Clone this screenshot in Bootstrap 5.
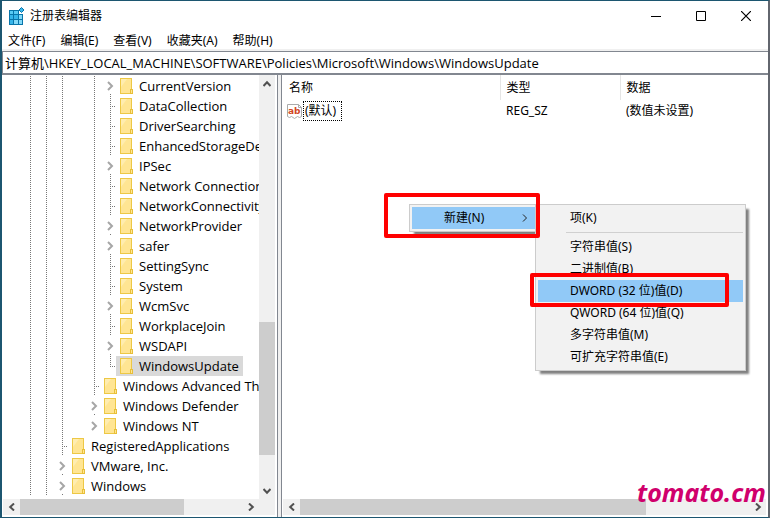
<!DOCTYPE html>
<html lang="zh-CN">
<head>
<meta charset="utf-8">
<meta name="viewport" content="width=device-width, initial-scale=1">
<title>注册表编辑器</title>
<link href="https://cdn.jsdelivr.net/npm/bootstrap@5.3.0/dist/css/bootstrap.min.css" rel="stylesheet">
<style>
body{font:12px/20px "Noto Sans","Noto Sans CJK SC",sans-serif;color:#000;background:#fff;overflow:hidden}
button,input{font:inherit;color:inherit}
button{background:none;border:0;padding:0}
.app{border:solid #1c5670;border-width:1px 2px 1px 2px;border-right-color:#62666e}
.titlebar{height:29px}
.winbtn{width:45px;height:28px}
.menus{height:19px;padding-left:6px;gap:15px}
.menus button{line-height:21px}
.strip{height:2px;background:#f0f0f0}
.addr{height:24px;border:1px solid #828790;border-bottom-width:2px;border-right:0;padding:0 2px;outline:0;font-family:"Open Sans","Noto Sans CJK SC",sans-serif;font-size:13px}
.side{width:276px;border-right:1px solid #828790}
.splitter{width:4px;background:#f0f0f0;border-right:1px solid #828790}
.tree{font-family:"Open Sans","Noto Sans CJK SC",sans-serif;font-size:13px;padding-top:1px}
.tree li{height:20px;padding-left:20px}
.rails{--d:repeating-linear-gradient(#777 0 1px,transparent 1px 2px);flex:none;background-repeat:no-repeat;background-size:1px 100%}
.r4{width:80px;background-image:var(--d),var(--d),var(--d),var(--d);background-position:8px 0,24px 0,40px 0,72px 0}
.r3{width:64px;background-image:var(--d),var(--d),var(--d);background-position:8px 0,24px 0,40px 0}
.r2{width:32px;background-image:var(--d),var(--d);background-position:8px 0,24px 0}
.joint{width:14px;flex:none}
.joint.leaf{background:repeating-linear-gradient(#777 0 1px,transparent 1px 2px) 8px 0/1px 100% no-repeat,repeating-linear-gradient(90deg,#777 0 1px,transparent 1px 2px) 8px 10px/6px 1px no-repeat}
.joint.end{background-size:1px 10px,6px 1px}
.joint.more{background:linear-gradient(#777,#777) 8px 18px/1px 1px no-repeat}
.joint.last{background:none}
.joint svg{display:block;margin:5px 0 0 4px}
.key{padding:0 4px;gap:6px;height:20px;line-height:19px;color:#000;text-decoration:none;white-space:nowrap}
.key svg{flex:none}
.key.on{background:#d9d9d9}
.bar{background:#f0f0f0}
.bar button{width:17px;height:16px;flex:none;display:flex;align-items:center;justify-content:center}
.vbar{width:16px;margin-right:2px}
.vbar button{height:17px;width:16px}
.thumb{background:#cdcdcd}
.t-v{height:34%}.s-v{height:59%}.t-l{width:74%}.t-r{width:77%}
.hb{height:16px;margin:0 2px 2px 1px}
.vals{table-layout:fixed;width:100%}
.vals th{font-weight:400;height:25px;padding:1px 0 0 6px;border-right:1px solid #e5e5e5}
.vals th:last-child{border-right:0}
.vals th:first-child{width:218px;padding-left:7px}.vals th:nth-child(2){width:120px}
.vals td{padding:0 0 0 6px;height:22px}
.vals td:first-child{padding-left:4px}
.picked{border:1px dotted #000;line-height:18px;padding:0 5px 0 1px;height:20px}
.pop{position:absolute;background:#f2f2f2;border:1px solid #ccc;padding:2px;box-shadow:4px 4px 2px -1px #808080;display:flex;flex-direction:column}
.pop button{height:22px;line-height:22px;text-align:left;padding-left:32px;white-space:nowrap}
.pop .hot{background:#91c9f7}
.pop hr{margin:3px 0 3px 28px;border-top:1px solid #d0d0d0;opacity:1}
.pop1{left:409px;top:204px;width:130px}
.pop2{left:535px;top:204px;width:211px}
.frame{position:absolute;border:4px solid #f00;border-radius:2px;pointer-events:none}
.f1{left:384px;top:193px;width:156px;height:45px}
.f2{left:530px;top:273px;width:199px;height:34px}
.brand{position:absolute;right:4px;bottom:10px;font:italic 700 25px/32px "Noto Sans",sans-serif;color:#d0006c}
</style>
<script src="https://cdn.jsdelivr.net/npm/bootstrap@5.3.0/dist/js/bootstrap.bundle.min.js"></script>
</head>
<body>
<svg class="d-none" aria-hidden="true">
<symbol id="fold" viewBox="0 0 13 16"><path d="M0 0h12v11h1v5H0z" fill="#edc845"/><path d="M1 1h10v14H1z" fill="#ffe593"/><path d="M1 1h6L1 9z" fill="#ffedb0"/><path d="M10 11h3v5h-3z" fill="#e8bf38"/><path d="M11 12h1v3h-1z" fill="#ffe593"/></symbol>
<symbol id="exp" viewBox="0 0 8 10"><path d="M2 1l4 4-4 4" fill="none" stroke="#a6a6a6" stroke-width="2"/></symbol>
<symbol id="arr" viewBox="0 0 8 8"><path d="M6 0.5L2.200 4 6 7.500" fill="none" stroke="#505050" stroke-width="2"/></symbol>
</svg>
<div class="app d-flex flex-column vh-100 position-relative">
<header class="titlebar d-flex align-items-center">
<svg class="ms-1 me-1" width="20" height="20" viewBox="0 0 20 20" aria-hidden="true"><path d="M3 4h10v4h4v11H3z" fill="#0875aa"/><path d="M4 5h3v3H4zM8 5h4v3H8z" fill="#58caf5"/><path d="M4 9h3v4H4zM8 9h4v4H8zM4 14h3v4H4z" fill="#36b5ea"/><path d="M13 9h3v4h-3zM8 14h4v4H8zM13 14h3v4h-3z" fill="#82d9f8"/><path d="M15.500 1.500l2.500 2.500-2.500 2.500-2.500-2.500z" fill="#36b5ea" stroke="#0875aa"/></svg>
<span class="flex-grow-1">注册表编辑器</span>
<button class="winbtn" aria-label="最小化"><svg width="10" height="10"><path d="M0 5.500h10" stroke="#000"/></svg></button>
<button class="winbtn" aria-label="最大化"><svg width="10" height="10"><path d="M.5.5h9v9h-9z" fill="none" stroke="#000"/></svg></button>
<button class="winbtn" aria-label="关闭"><svg width="10" height="10"><path d="M0 0l10 10M10 0L0 10" stroke="#000" stroke-width="1.200"/></svg></button>
</header>
<nav class="menus d-flex"><button>文件(F)</button><button>编辑(E)</button><button>查看(V)</button><button>收藏夹(A)</button><button>帮助(H)</button></nav>
<div class="strip"></div>
<input class="addr w-100" aria-label="地址" value="计算机\HKEY_LOCAL_MACHINE\SOFTWARE\Policies\Microsoft\Windows\WindowsUpdate">
<main class="d-flex flex-grow-1 overflow-hidden">
<aside class="side d-flex flex-column flex-shrink-0">
<div class="d-flex flex-grow-1 overflow-hidden">
<ul class="tree list-unstyled mb-0 flex-grow-1 overflow-hidden">
<li class="d-flex"><span class="rails r4"></span><span class="joint more"><svg width="8" height="10"><use href="#exp"/></svg></span><a href="#" class="key d-flex align-items-center"><svg width="13" height="16"><use href="#fold"/></svg>CurrentVersion</a></li>
<li class="d-flex"><span class="rails r4"></span><span class="joint leaf"></span><a href="#" class="key d-flex align-items-center"><svg width="13" height="16"><use href="#fold"/></svg>DataCollection</a></li>
<li class="d-flex"><span class="rails r4"></span><span class="joint leaf"></span><a href="#" class="key d-flex align-items-center"><svg width="13" height="16"><use href="#fold"/></svg>DriverSearching</a></li>
<li class="d-flex"><span class="rails r4"></span><span class="joint leaf"></span><a href="#" class="key d-flex align-items-center"><svg width="13" height="16"><use href="#fold"/></svg>EnhancedStorageDev</a></li>
<li class="d-flex"><span class="rails r4"></span><span class="joint more"><svg width="8" height="10"><use href="#exp"/></svg></span><a href="#" class="key d-flex align-items-center"><svg width="13" height="16"><use href="#fold"/></svg>IPSec</a></li>
<li class="d-flex"><span class="rails r4"></span><span class="joint leaf"></span><a href="#" class="key d-flex align-items-center"><svg width="13" height="16"><use href="#fold"/></svg>Network Connection</a></li>
<li class="d-flex"><span class="rails r4"></span><span class="joint leaf"></span><a href="#" class="key d-flex align-items-center"><svg width="13" height="16"><use href="#fold"/></svg>NetworkConnectivity</a></li>
<li class="d-flex"><span class="rails r4"></span><span class="joint more"><svg width="8" height="10"><use href="#exp"/></svg></span><a href="#" class="key d-flex align-items-center"><svg width="13" height="16"><use href="#fold"/></svg>NetworkProvider</a></li>
<li class="d-flex"><span class="rails r4"></span><span class="joint more"><svg width="8" height="10"><use href="#exp"/></svg></span><a href="#" class="key d-flex align-items-center"><svg width="13" height="16"><use href="#fold"/></svg>safer</a></li>
<li class="d-flex"><span class="rails r4"></span><span class="joint leaf"></span><a href="#" class="key d-flex align-items-center"><svg width="13" height="16"><use href="#fold"/></svg>SettingSync</a></li>
<li class="d-flex"><span class="rails r4"></span><span class="joint leaf"></span><a href="#" class="key d-flex align-items-center"><svg width="13" height="16"><use href="#fold"/></svg>System</a></li>
<li class="d-flex"><span class="rails r4"></span><span class="joint more"><svg width="8" height="10"><use href="#exp"/></svg></span><a href="#" class="key d-flex align-items-center"><svg width="13" height="16"><use href="#fold"/></svg>WcmSvc</a></li>
<li class="d-flex"><span class="rails r4"></span><span class="joint leaf"></span><a href="#" class="key d-flex align-items-center"><svg width="13" height="16"><use href="#fold"/></svg>WorkplaceJoin</a></li>
<li class="d-flex"><span class="rails r4"></span><span class="joint more"><svg width="8" height="10"><use href="#exp"/></svg></span><a href="#" class="key d-flex align-items-center"><svg width="13" height="16"><use href="#fold"/></svg>WSDAPI</a></li>
<li class="d-flex"><span class="rails r4"></span><span class="joint leaf end"></span><a href="#" class="key on d-flex align-items-center"><svg width="13" height="16"><use href="#fold"/></svg>WindowsUpdate</a></li>
<li class="d-flex"><span class="rails r3"></span><span class="joint leaf"></span><a href="#" class="key d-flex align-items-center"><svg width="13" height="16"><use href="#fold"/></svg>Windows Advanced Thr</a></li>
<li class="d-flex"><span class="rails r3"></span><span class="joint more"><svg width="8" height="10"><use href="#exp"/></svg></span><a href="#" class="key d-flex align-items-center"><svg width="13" height="16"><use href="#fold"/></svg>Windows Defender</a></li>
<li class="d-flex"><span class="rails r3"></span><span class="joint last"><svg width="8" height="10"><use href="#exp"/></svg></span><a href="#" class="key d-flex align-items-center"><svg width="13" height="16"><use href="#fold"/></svg>Windows NT</a></li>
<li class="d-flex"><span class="rails r2"></span><span class="joint leaf"></span><a href="#" class="key d-flex align-items-center"><svg width="13" height="16"><use href="#fold"/></svg>RegisteredApplications</a></li>
<li class="d-flex"><span class="rails r2"></span><span class="joint more"><svg width="8" height="10"><use href="#exp"/></svg></span><a href="#" class="key d-flex align-items-center"><svg width="13" height="16"><use href="#fold"/></svg>VMware, Inc.</a></li>
<li class="d-flex"><span class="rails r2"></span><span class="joint more"><svg width="8" height="10"><use href="#exp"/></svg></span><a href="#" class="key d-flex align-items-center"><svg width="13" height="16"><use href="#fold"/></svg>Windows</a></li>
</ul>
<div class="bar vbar d-flex flex-column">
<button aria-label="向上"><svg width="8" height="8" viewBox="0 0 8 8"><path d="M.5 6L4 2.200 7.500 6" fill="none" stroke="#505050" stroke-width="2"/></svg></button>
<div class="flex-grow-1"><div class="s-v"></div><div class="thumb t-v"></div></div>
<button aria-label="向下"><svg width="8" height="8" viewBox="0 0 8 8"><path d="M.5 2L4 5.800 7.500 2" fill="none" stroke="#505050" stroke-width="2"/></svg></button>
</div>
</div>
<div class="bar hb d-flex">
<button aria-label="向左"><svg width="8" height="8"><use href="#arr"/></svg></button>
<div class="flex-grow-1"><div class="thumb t-l h-100"></div></div>
<button class="me-3" aria-label="向右"><svg width="8" height="8" viewBox="0 0 8 8"><path d="M2 .5L5.800 4 2 7.500" fill="none" stroke="#505050" stroke-width="2"/></svg></button>
</div>
</aside>
<div class="splitter flex-shrink-0"></div>
<section class="d-flex flex-column flex-grow-1">
<div class="flex-grow-1">
<table class="vals">
<thead><tr><th>名称</th><th>类型</th><th>数据</th></tr></thead>
<tbody><tr><td><div class="d-flex align-items-center"><svg width="17" height="17" viewBox="0 0 17 17" aria-hidden="true"><path d="M1.500 1.500h11l3 3v9l-2 1-2-1-3 2-3-2-2 1-2-1z" fill="#fff" stroke="#aaa"/><path d="M12.500 1.500v3h3" fill="none" stroke="#aaa"/><text x="2" y="11" font-family="DejaVu Sans" font-size="9" font-weight="700" fill="#d24726">ab</text></svg><span class="picked">(默认)</span></div></td><td>REG_SZ</td><td>(数值未设置)</td></tr></tbody>
</table>
</div>
<div class="bar hb d-flex">
<button aria-label="向左"><svg width="8" height="8"><use href="#arr"/></svg></button>
<div class="flex-grow-1"><div class="thumb t-r h-100"></div></div>
<button aria-label="向右"><svg width="8" height="8" viewBox="0 0 8 8"><path d="M2 .5L5.800 4 2 7.500" fill="none" stroke="#505050" stroke-width="2"/></svg></button>
</div>
</section>
</main>
</div>
<div class="pop pop1"><button class="hot d-flex align-items-center">新建(N)<svg class="ms-auto me-2" width="6" height="8" viewBox="0 0 6 8"><path d="M1 .5L4.500 4 1 7.500" fill="none" stroke="#222"/></svg></button></div>
<div class="pop pop2"><button>项(K)</button><hr><button>字符串值(S)</button><button>二进制值(B)</button><button class="hot">DWORD (32 位)值(D)</button><button>QWORD (64 位)值(Q)</button><button>多字符串值(M)</button><button>可扩充字符串值(E)</button></div>
<div class="frame f1"></div>
<div class="frame f2"></div>
<div class="brand">tomato.cm</div>
</body>
</html>
